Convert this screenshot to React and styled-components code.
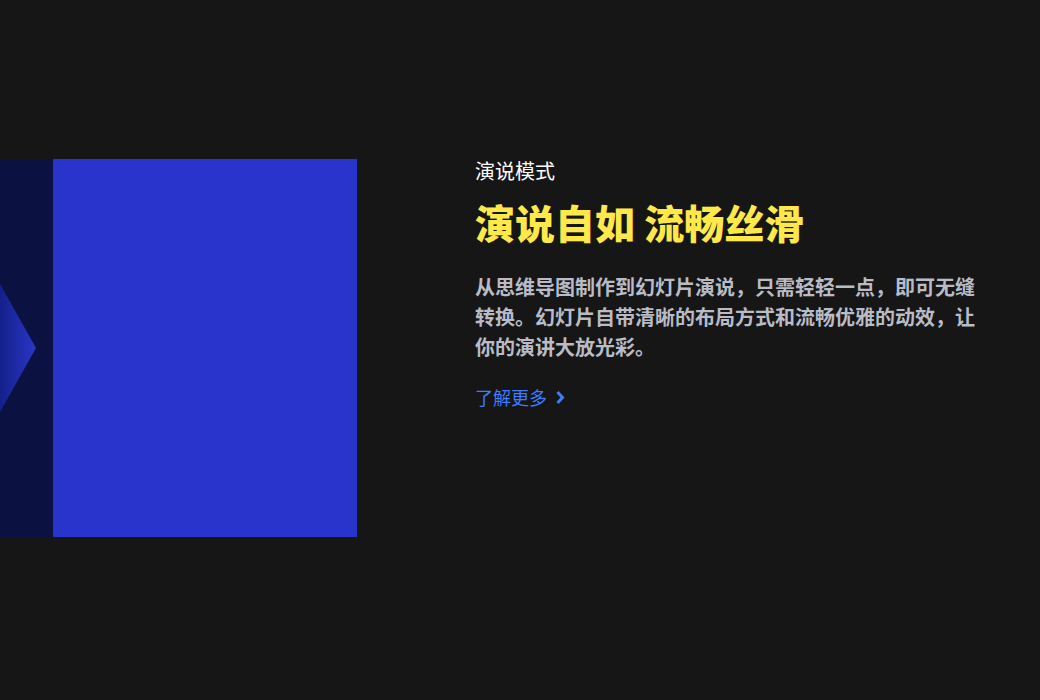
import React from 'react';
import styled, { createGlobalStyle } from 'styled-components';

const GlobalStyle = createGlobalStyle`
  html, body {
    margin: 0;
    padding: 0;
    background: #161616;
  }
  body {
    font-family: "Noto Sans CJK SC", "Noto Sans", sans-serif;
  }
`;

const Page = styled.div`
  width: 1040px;
  height: 700px;
  display: flex;
  align-items: flex-start;
  padding-top: 159px;
  box-sizing: border-box;
  overflow: hidden;
`;

const Visual = styled.div`
  display: flex;
  width: 357px;
  height: 378px;
  flex-shrink: 0;
`;

const Strip = styled.div`
  width: 53px;
  height: 100%;
  background: #0b1140;
  display: flex;
  align-items: center;
`;

const Slide = styled.div`
  flex: 1;
  background: #2934cc;
`;

const Copy = styled.div`
  margin-left: 118px;
  width: 504px;
  display: flex;
  flex-direction: column;
`;

const Label = styled.div`
  color: #ffffff;
  font-size: 20px;
  line-height: 24px;
`;

const Title = styled.h2`
  margin: 15px 0 0;
  color: #ffe84a;
  font-size: 40px;
  font-weight: 900;
  line-height: 48px;
`;

const Text = styled.p`
  margin: 26px 0 0;
  color: #b9bcc6;
  font-size: 20px;
  font-weight: 700;
  line-height: 30px;
`;

const More = styled.a`
  margin-top: 23px;
  color: #3d7bff;
  font-size: 18px;
  line-height: 24px;
  text-decoration: none;
  display: flex;
  align-items: center;
  gap: 8px;
`;

const Arrow = () => (
  <svg width="36" height="128" viewBox="0 0 36 128">
    <defs>
      <linearGradient id="dg" x1="0" y1="0" x2="1" y2="0">
        <stop offset="0" stopColor="#14208a" />
        <stop offset="1" stopColor="#2a36c8" />
      </linearGradient>
    </defs>
    <polygon points="0,0 36,64 0,128" fill="url(#dg)" />
  </svg>
);

const Chevron = () => (
  <svg width="10" height="15" viewBox="0 0 10 15">
    <path d="M2.5 2 L7.5 7.5 L2.5 13" fill="none" stroke="#3d7bff" strokeWidth="3" />
  </svg>
);

export default function App() {
  return (
    <>
      <GlobalStyle />
      <Page>
        <Visual>
          <Strip>
            <Arrow />
          </Strip>
          <Slide />
        </Visual>
        <Copy>
          <Label>演说模式</Label>
          <Title>演说自如 流畅丝滑</Title>
          <Text>
            从思维导图制作到幻灯片演说，只需轻轻一点，即可无缝转换。幻灯片自带清晰的布局方式和流畅优雅的动效，让你的演讲大放光彩。
          </Text>
          <More href="#">
            了解更多
            <Chevron />
          </More>
        </Copy>
      </Page>
    </>
  );
}
